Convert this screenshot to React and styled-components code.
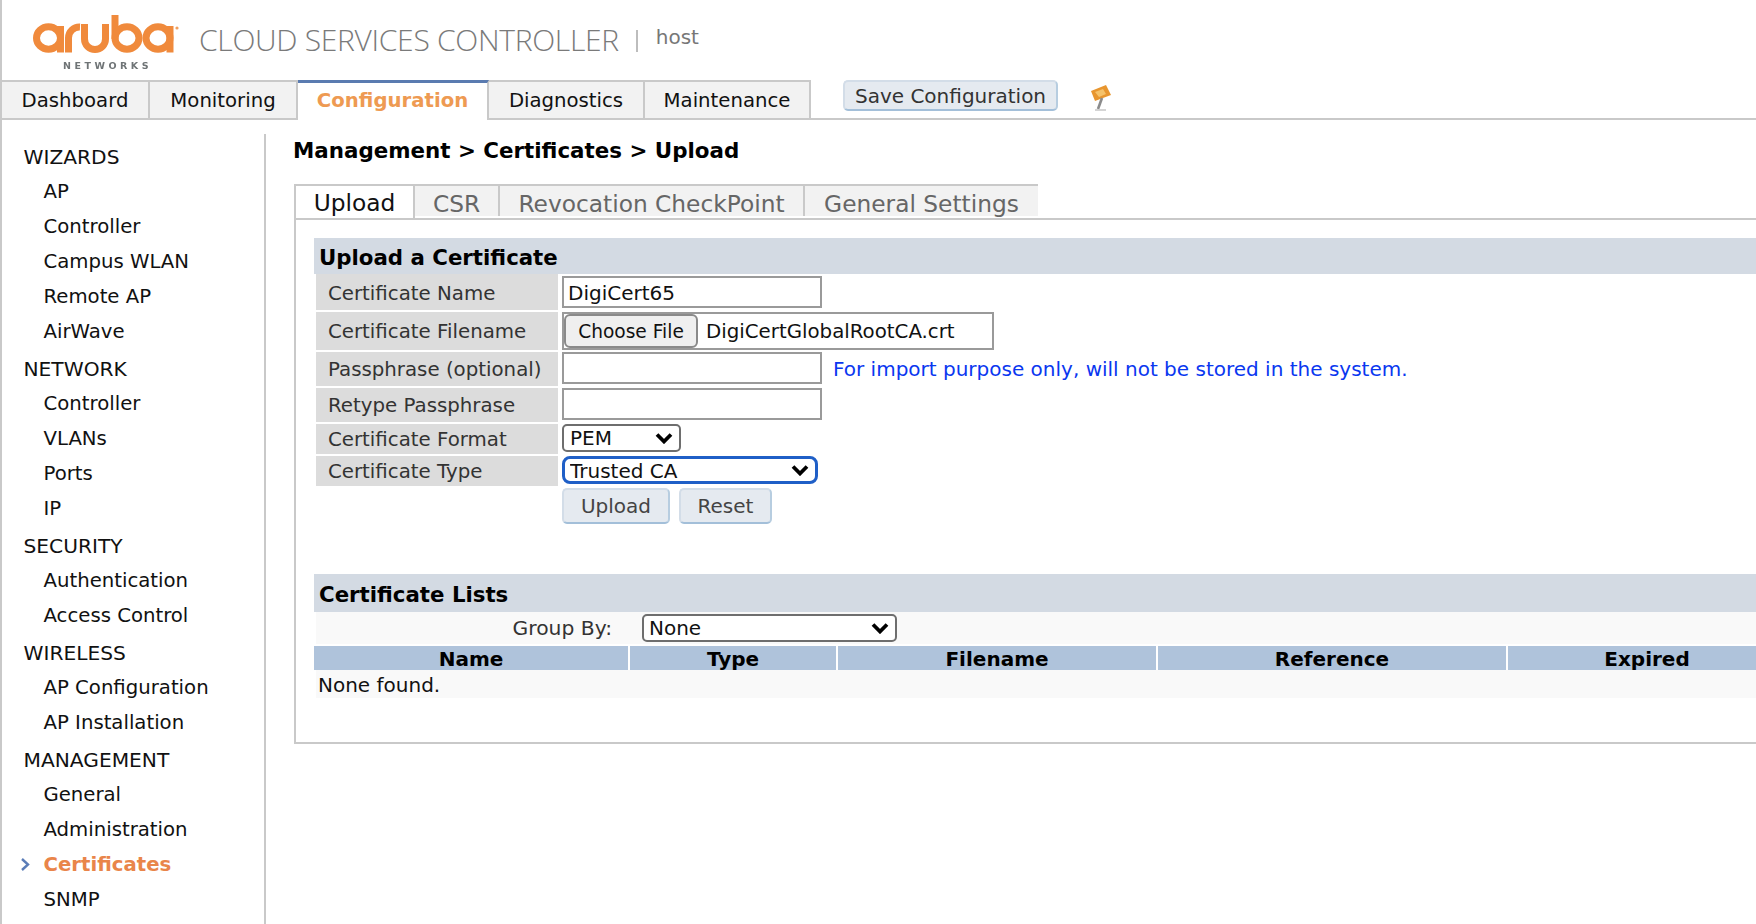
import React from "react";
import styled, { createGlobalStyle } from "styled-components";

const Global = createGlobalStyle`
  html, body { margin: 0; padding: 0; background: #fff; }
  body { font-family: "DejaVu Sans", "Liberation Sans", sans-serif; overflow: hidden; }
  * { box-sizing: border-box; }
`;

const Page = styled.div`
  width: 1756px; height: 924px; overflow: hidden;
  border-left: 2px solid #c9c9c9;
  display: flex; flex-direction: column; color: #111;
`;
const Header = styled.header`
  height: 80px; flex: none; display: flex; align-items: flex-start; padding-left: 28px;
`;
const LogoSvg = styled.svg`
  width: 150px; height: 60px; margin-top: 13px; flex: none; overflow: visible;
`;
const Title = styled.div`
  margin: 20px 0 0 19px; font-family: "Open Sans", sans-serif; font-weight: 300;
  font-size: 30px; letter-spacing: -0.3px; line-height: 40px; color: #7a7a7a; white-space: nowrap;
`;
const Divider = styled.div`
  width: 2px; height: 22px; background: #bdbdbd; margin: 30px 0 0 17px;
`;
const Host = styled.div`
  margin: 25px 0 0 18px; font-size: 20px; line-height: 24px; color: #777;
`;
const TopBar = styled.nav`
  height: 40px; flex: none; display: flex; align-items: flex-start;
  border-bottom: 2px solid #c9c9c9;
`;
const TopTab = styled.a`
  height: 38px; width: ${p => p.$w}px; display: flex; align-items: center; justify-content: center;
  font-size: 19.7px; padding-top: 1px;
  background: ${p => (p.$active ? "#fff" : "#f2f2f2")};
  color: ${p => (p.$active ? "#ee9a52" : "#111")};
  font-weight: ${p => (p.$active ? 700 : 400)};
  border-top: ${p => (p.$active ? "3px solid #5a7bb0" : "2px solid #c9c9c9")};
  border-right: 2px solid #c9c9c9;
  ${p => p.$active && "height: 40px; margin-bottom: -2px; padding-bottom: 3px; padding-top: 0;"}
`;
const SaveButton = styled.button`
  height: 31px; width: 215px; margin-left: 32px; border-radius: 5px; padding: 0;
  background: #e5eaf0; border: 2px solid #d3dde8; border-bottom-color: #a3bfd9; border-right-color: #b7cde0;
  font: 20px "DejaVu Sans", sans-serif; color: #333;
`;
const FlagSvg = styled.svg`
  width: 32px; height: 30px; margin: 2px 0 0 31px; filter: blur(0.6px);
`;
const Body = styled.div`
  flex: 1; display: flex; min-height: 0;
`;
const Sidebar = styled.aside`
  width: 264px; flex: none; margin-top: 14px; padding-top: 7px;
  border-right: 2px solid #c9c9c9;
`;
const Group = styled.div`
  margin-bottom: 4px;
`;
const GroupHead = styled.div`
  height: 33px; line-height: 33px; font-size: 20.2px; padding-left: 21.5px;
`;
const Item = styled.div`
  position: relative; height: 35px; line-height: 35px; font-size: 19.7px; padding-left: 41.5px;
  color: ${p => (p.$active ? "#e9854a" : "#111")};
  font-weight: ${p => (p.$active ? 700 : 400)};
`;
const Chevron = styled.svg`
  position: absolute; left: 17px; top: 10px; width: 12px; height: 15px;
`;
const Main = styled.main`
  flex: 1; min-width: 0; padding-left: 28px; 
`;
const Breadcrumb = styled.h1`
  margin: 0 0 0 -1px; height: 64px; padding-top: 17px; line-height: 28px;
  font-size: 21.4px; font-weight: 700; color: #000; white-space: nowrap;
`;
const SubTabs = styled.div`
  display: flex; height: 34px; align-items: flex-start;
`;
const SubTab = styled.a`
  height: ${p => (p.$active ? "34px" : "32px")}; width: ${p => p.$w}px;
  display: flex; align-items: center; justify-content: center;
  font-size: 23.3px; padding-top: ${p => (p.$active ? 1 : 4)}px;
  color: ${p => (p.$active ? "#111" : "#666")};
  background: ${p => (p.$active ? "#fff" : "#f2f2f2")};
  border-top: 2px solid #c9c9c9;
  border-right: ${p => (p.$last ? "0" : "2px solid #c9c9c9")};
  ${p => p.$active && "border-left: 2px solid #c9c9c9;"}
`;
const Panel = styled.section`
  border-top: 2px solid #c9c9c9; border-left: 2px solid #c9c9c9; border-bottom: 2px solid #c9c9c9;
  padding: 18px 0 44px 18px; height: 526px; width: 1600px;
`;
const SectionHead = styled.h2`
  margin: 0; background: #d3dae3; font-size: 21.3px; font-weight: 700; color: #000;
  height: ${p => p.$h}px; line-height: ${p => p.$h + 4}px; padding-left: 5px; white-space: nowrap;
`;
const FormRow = styled.div`
  display: flex; margin: 0 0 2px 2px; height: ${p => p.$h}px;
`;
const Label = styled.label`
  width: 242px; flex: none; background: #dcdcdc; color: #333; font-size: 19.8px;
  display: flex; align-items: center; padding: ${p => p.$pt || 0}px 0 0 12px; white-space: nowrap;
`;
const Value = styled.div`
  margin-left: 4px; display: flex; align-items: flex-start; white-space: nowrap;
`;
const TextField = styled.input`
  width: 260px; height: 32px; margin-top: ${p => p.$mt || 0}px; border: 2px solid #9a9a9a; border-radius: 0;
  font: 20px "DejaVu Sans", sans-serif; color: #111; padding: 2px 5px 0 4px; background: #fff; outline: none;
`;
const FileBox = styled.div`
  width: 432px; height: 38px; border: 2px solid #9a9a9a; display: flex; align-items: center; font-size: 19.8px; color: #111;
`;
const ChooseButton = styled.button`
  width: 134px; height: 34px; border: 2px solid #8a8a8a; border-radius: 6px; background: #efefef; padding: 0;
  font: 18.6px "DejaVu Sans", sans-serif; color: #111; margin-right: 8px;
`;
const SelectWrap = styled.div`
  position: relative; width: ${p => p.$w}px; height: 28px; margin-left: ${p => p.$ml || 0}px;
  border: ${p => (p.$focus ? "3.5px solid #1f5fc7" : "2px solid #6e6e6e")};
  border-radius: ${p => (p.$focus ? 8 : 5)}px; background: #fff;
`;
const Select = styled.select`
  appearance: none; -webkit-appearance: none; width: 100%; height: 100%; border: 0; background: transparent;
  outline: none; font: 20px "DejaVu Sans", sans-serif; color: #111; padding: 0 0 0 ${p => p.$pl || 6}px; display: block;
`;
const Arrow = styled.svg`
  position: absolute; right: 6px; top: 50%; margin-top: -6px; width: 18px; height: 12px; pointer-events: none;
`;
const Note = styled.span`
  margin: 4px 0 0 11px; font-size: 20px; line-height: 26px; color: #0a37f0;
`;
const ActionRow = styled.div`
  display: flex; gap: 9px; margin: 0 0 0 248px; height: 36px;
`;
const FormButton = styled.button`
  width: ${p => p.$w}px; height: 36px; border-radius: 5px; padding: 0;
  background: #e5eaf0; border: 2px solid #d3dde8; border-bottom-color: #a3bfd9; border-right-color: #b7cde0;
  font: 20px "DejaVu Sans", sans-serif; color: #444;
`;
const ListHead = styled(SectionHead)`
  margin-top: 50px;
`;
const GroupBar = styled.div`
  margin: 0 0 2px 2px; height: 32px; background: #f9f9f9; display: flex; align-items: center;
`;
const GroupLabel = styled.span`
  width: 296px; text-align: right; font-size: 20.3px; color: #333;
`;
const TableHead = styled.div`
  display: grid; grid-template-columns: 314px 206px 318px 348px 278px; column-gap: 2px; height: 24px;
`;
const HeadCell = styled.div`
  background: #afc3db; text-align: center; font-size: 20px; font-weight: 700; line-height: 27px; color: #000;
  overflow: hidden;
`;
const EmptyRow = styled.div`
  margin-left: 2px; height: 28px; background: #f9f9f9; font-size: 20px; line-height: 30px; padding-left: 2px; color: #111;
`;

const groups = [
  ["WIZARDS", ["AP", "Controller", "Campus WLAN", "Remote AP", "AirWave"]],
  ["NETWORK", ["Controller", "VLANs", "Ports", "IP"]],
  ["SECURITY", ["Authentication", "Access Control"]],
  ["WIRELESS", ["AP Configuration", "AP Installation"]],
  ["MANAGEMENT", ["General", "Administration", "Certificates", "SNMP"]],
];

const Chev = () => (
  <Arrow viewBox="0 0 18 12">
    <polyline points="2,2.5 9,9.5 16,2.5" fill="none" stroke="#000" strokeWidth="3.8" />
  </Arrow>
);

const Logo = () => (
  <LogoSvg viewBox="0 0 150 60">
    <g fill="none" stroke="#f08a3c" strokeWidth="7" strokeLinecap="butt" style={{ filter: "blur(0.6px)" }}>
      <ellipse cx="18.5" cy="25" rx="12" ry="11.2" />
      <line x1="30.5" y1="13" x2="30.5" y2="39.5" />
      <path d="M38.5 39.5 V25 A11 11 0 0 1 50 14" />
      <path d="M54.5 11 V26 A10.5 10.5 0 0 0 75.5 26 V11" />
      <line x1="85" y1="2" x2="85" y2="26" />
      <ellipse cx="97" cy="25" rx="12" ry="11.2" />
      <ellipse cx="128" cy="25" rx="12" ry="11.2" />
      <line x1="140" y1="13" x2="140" y2="39.5" />
    </g>
    <circle cx="147" cy="15" r="1.6" fill="#f0a060" />
    <text x="33" y="56" fontFamily="DejaVu Sans" fontSize="9.5" fontWeight="700" letterSpacing="3.5" fill="#6f7476" style={{ filter: "blur(0.3px)" }}>NETWORKS</text>
  </LogoSvg>
);

export default function App() {
  return (
    <Page>
      <Global />
      <Header>
        <Logo />
        <Title>CLOUD SERVICES CONTROLLER</Title>
        <Divider />
        <Host>host</Host>
      </Header>
      <TopBar>
        <TopTab $w={148}>Dashboard</TopTab>
        <TopTab $w={148}>Monitoring</TopTab>
        <TopTab $w={191} $active>Configuration</TopTab>
        <TopTab $w={156}>Diagnostics</TopTab>
        <TopTab $w={166}>Maintenance</TopTab>
        <SaveButton>Save Configuration</SaveButton>
        <FlagSvg viewBox="0 0 32 30">
          <polygon points="2,9 17,3 22,13 6,19" fill="#e8962f" />
          <polygon points="6,10 14,7 17,12 10,15" fill="#f5c26a" />
          <line x1="13" y1="16" x2="9" y2="27" stroke="#8b8b8b" strokeWidth="2.6" />
          <line x1="6" y1="28" x2="17" y2="28" stroke="#c9c9c9" strokeWidth="1.6" />
        </FlagSvg>
      </TopBar>
      <Body>
        <Sidebar>
          {groups.map(([head, items]) => (
            <Group key={head}>
              <GroupHead>{head}</GroupHead>
              {items.map(i => (
                <Item key={i} $active={i === "Certificates"}>
                  {i === "Certificates" && (
                    <Chevron viewBox="0 0 12 15">
                      <polyline points="3,2 9,7.5 3,13" fill="none" stroke="#5b7db8" strokeWidth="2.4" />
                    </Chevron>
                  )}
                  {i}
                </Item>
              ))}
            </Group>
          ))}
        </Sidebar>
        <Main>
          <Breadcrumb>Management &gt; Certificates &gt; Upload</Breadcrumb>
          <SubTabs>
            <SubTab $w={121} $active>Upload</SubTab>
            <SubTab $w={85}>CSR</SubTab>
            <SubTab $w={305}>Revocation CheckPoint</SubTab>
            <SubTab $w={233} $last>General Settings</SubTab>
          </SubTabs>
          <Panel>
            <SectionHead $h={36}>Upload a Certificate</SectionHead>
            <FormRow $h={36}>
              <Label $pt={2}>Certificate Name</Label>
              <Value><TextField $mt={2} defaultValue="DigiCert65" /></Value>
            </FormRow>
            <FormRow $h={38}>
              <Label>Certificate Filename</Label>
              <Value>
                <FileBox>
                  <ChooseButton>Choose File</ChooseButton>
                  DigiCertGlobalRootCA.crt
                </FileBox>
              </Value>
            </FormRow>
            <FormRow $h={34}>
              <Label>Passphrase (optional)</Label>
              <Value>
                <TextField />
                <Note>For import purpose only, will not be stored in the system.</Note>
              </Value>
            </FormRow>
            <FormRow $h={34}>
              <Label>Retype Passphrase</Label>
              <Value><TextField /></Value>
            </FormRow>
            <FormRow $h={30}>
              <Label>Certificate Format</Label>
              <Value>
                <SelectWrap $w={119}>
                  <Select defaultValue="PEM" $pl={6}><option>PEM</option></Select>
                  <Chev />
                </SelectWrap>
              </Value>
            </FormRow>
            <FormRow $h={30}>
              <Label>Certificate Type</Label>
              <Value>
                <SelectWrap $w={256} $focus>
                  <Select defaultValue="Trusted CA" $pl={5}><option>Trusted CA</option></Select>
                  <Chev />
                </SelectWrap>
              </Value>
            </FormRow>
            <ActionRow>
              <FormButton $w={108}>Upload</FormButton>
              <FormButton $w={93}>Reset</FormButton>
            </ActionRow>
            <ListHead $h={38}>Certificate Lists</ListHead>
            <GroupBar>
              <GroupLabel>Group By:</GroupLabel>
              <SelectWrap $w={255} $ml={30}>
                <Select defaultValue="None" $pl={5}><option>None</option></Select>
                <Chev />
              </SelectWrap>
            </GroupBar>
            <TableHead>
              <HeadCell>Name</HeadCell>
              <HeadCell>Type</HeadCell>
              <HeadCell>Filename</HeadCell>
              <HeadCell>Reference</HeadCell>
              <HeadCell>Expired</HeadCell>
            </TableHead>
            <EmptyRow>None found.</EmptyRow>
          </Panel>
        </Main>
      </Body>
    </Page>
  );
}
